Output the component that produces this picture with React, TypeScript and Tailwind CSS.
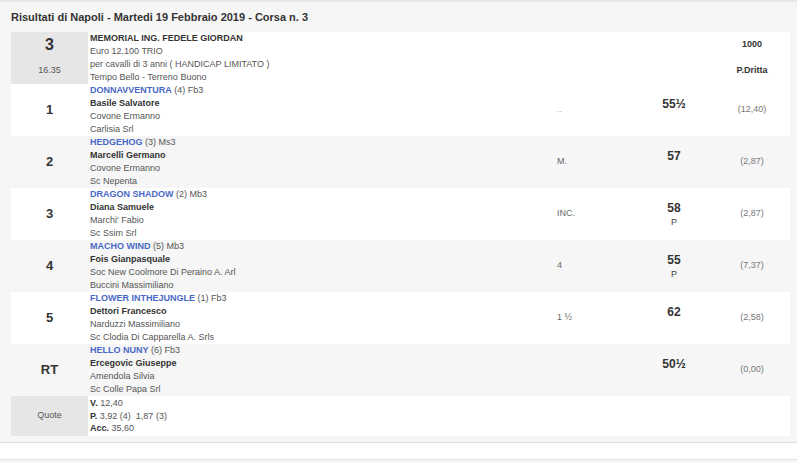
const runners = [
  { pos: '1', horse: 'DONNAVVENTURA', extra: '(4) Fb3', jockey: 'Basile Salvatore', trainer: 'Covone Ermanno', owner: 'Carlisia Srl', dist: '..', weight: '55½', p: false, odds: '(12,40)' },
  { pos: '2', horse: 'HEDGEHOG', extra: '(3) Ms3', jockey: 'Marcelli Germano', trainer: 'Covone Ermanno', owner: 'Sc Nepenta', dist: 'M.', weight: '57', p: false, odds: '(2,87)' },
  { pos: '3', horse: 'DRAGON SHADOW', extra: '(2) Mb3', jockey: 'Diana Samuele', trainer: "Marchi' Fabio", owner: 'Sc Ssim Srl', dist: 'INC.', weight: '58', p: true, odds: '(2,87)' },
  { pos: '4', horse: 'MACHO WIND', extra: '(5) Mb3', jockey: 'Fois Gianpasquale', trainer: 'Soc New Coolmore Di Peraino A. Arl', owner: 'Buccini Massimiliano', dist: '4', weight: '55', p: true, odds: '(7,37)' },
  { pos: '5', horse: 'FLOWER INTHEJUNGLE', extra: '(1) Fb3', jockey: 'Dettori Francesco', trainer: 'Narduzzi Massimiliano', owner: 'Sc Clodia Di Capparella A. Srls', dist: '1 ½', weight: '62', p: false, odds: '(2,58)' },
  { pos: 'RT', horse: 'HELLO NUNY', extra: '(6) Fb3', jockey: 'Ercegovic Giuseppe', trainer: 'Amendola Silvia', owner: 'Sc Colle Papa Srl', dist: '', weight: '50½', p: false, odds: '(0,00)' },
];

export default function App() {
  return (
    <div className="min-h-screen bg-white font-['Liberation_Sans',Arial,sans-serif] text-[#555]">
      <div className="border-t-2 border-b border-t-[#e6e6e6] border-b-[#dedede] bg-[#f6f6f6] pl-[11px] pr-[7px] pb-[6px]">
        <div className="h-[30px] flex items-center text-[11px] font-bold text-[#333]">
          Risultati di Napoli - Martedi 19 Febbraio 2019 - Corsa n. 3
        </div>

        {/* intestazione corsa */}
        <div className="grid grid-cols-[77px_467px_85px_68px_82px] h-[52px] bg-white">
          <div className="bg-[#e6e6e6] flex flex-col">
            <div className="h-[26px] flex items-center justify-center text-[16px] font-bold text-[#333]">3</div>
            <div className="h-[26px] flex items-center justify-center text-[9px]">16.35</div>
          </div>
          <div className="pl-[2px] text-[9px] leading-[13px]">
            <div className="font-bold text-[#333]">MEMORIAL ING. FEDELE GIORDAN</div>
            <div>Euro 12.100 TRIO</div>
            <div>per cavalli di 3 anni ( HANDICAP LIMITATO )</div>
            <div>Tempo Bello - Terreno Buono</div>
          </div>
          <div />
          <div />
          <div className="flex flex-col pl-[6px] text-[9px] font-bold text-[#333]">
            <div className="h-[26px] flex items-center justify-center">1000</div>
            <div className="h-[26px] flex items-center justify-center">P.Dritta</div>
          </div>
        </div>

        {runners.map((r, i) => (
          <div
            key={r.horse}
            className={`grid grid-cols-[77px_467px_85px_68px_82px] h-[52px] ${i % 2 === 0 ? 'bg-white' : 'bg-[#f6f6f6]'}`}
          >
            <div className="flex items-center justify-center text-[13px] font-bold text-[#333]">{r.pos}</div>
            <div className="pl-[2px] text-[9px] leading-[13px]">
              <div>
                <span className="font-bold text-[#4a68c8]">{r.horse}</span> {r.extra}
              </div>
              <div className="font-bold text-[#333]">{r.jockey}</div>
              <div>{r.trainer}</div>
              <div>{r.owner}</div>
            </div>
            <div className={`flex items-center pl-[2px] text-[9px] ${r.dist === '..' ? 'text-[#aaa]' : 'text-[#666]'}`}>{r.dist}</div>
            <div className="flex flex-col items-center justify-center">
              <div className="text-[12px] font-bold leading-[16px] text-[#333]">{r.weight}</div>
              <div className="text-[9px] leading-[13px] text-[#444]">{r.p ? 'P' : '\u00a0'}</div>
            </div>
            <div className="flex items-center justify-center pl-[6px] text-[9px] text-[#777]">{r.odds}</div>
          </div>
        ))}

        {/* quote */}
        <div className="grid grid-cols-[77px_702px] h-[40px] bg-white">
          <div className="bg-[#e6e6e6] flex items-center justify-center text-[9px]">Quote</div>
          <div className="pl-[2px] pt-[1px] text-[9px] leading-[12.5px]">
            <div><span className="font-bold text-[#333]">V.</span> 12,40</div>
            <div><span className="font-bold text-[#333]">P.</span> 3,92 (4)&nbsp; 1,87 (3)</div>
            <div><span className="font-bold text-[#333]">Acc.</span> 35,60</div>
          </div>
        </div>
      </div>
      <div className="h-[16px] bg-white" />
      <div className="border-t border-[#e0e0e0] bg-[#f7f7f7] h-[4px]" />
    </div>
  );
}
